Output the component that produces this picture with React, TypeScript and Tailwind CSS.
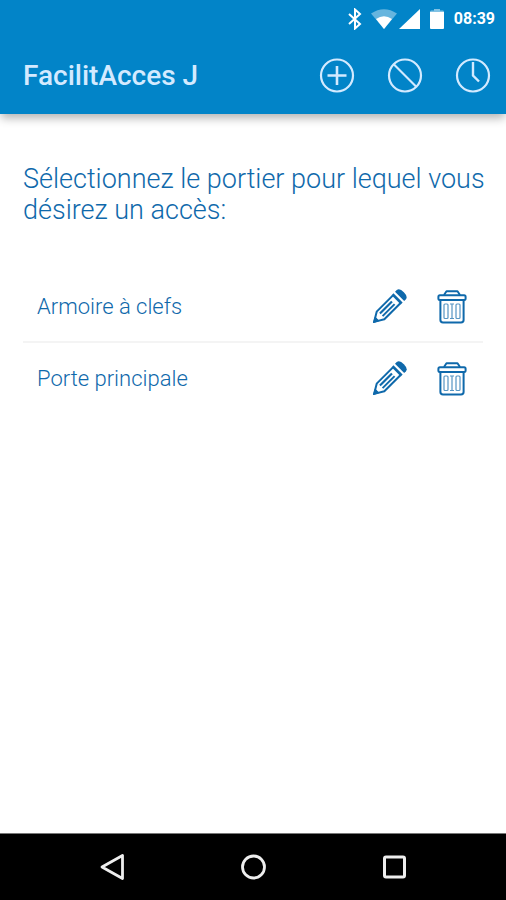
const doors = ["Armoire à clefs", "Porte principale"];

function StatusBar() {
  return (
    <div className="flex h-[38px] items-center justify-end pr-[11px] text-white">
      <svg width="14" height="22" viewBox="0 0 14 22" fill="none" stroke="currentColor" strokeWidth="2" aria-hidden="true">
        <path d="M1 6 L12 16 L7 20.5 V1.5 L12 6 L1 16" />
      </svg>
      <svg className="ml-[9px]" width="26" height="20" viewBox="0 0 26 20" fill="currentColor" aria-hidden="true">
        <path opacity="0.4" d="M0 4.5 Q13 -4 26 4.5 L13 20 Z" />
        <path d="M5 10 Q13 4.5 21 10 L13 20 Z" />
      </svg>
      <svg className="ml-[2px]" width="21" height="20" viewBox="0 0 21 20" fill="currentColor" aria-hidden="true">
        <path d="M21 0 V20 H0 Z" />
      </svg>
      <svg className="ml-[10px]" width="14" height="20" viewBox="0 0 14 20" fill="currentColor" aria-hidden="true">
        <path opacity="0.5" d="M4 0 H10 V1.5 H13 Q14 1.5 14 3 H0 Q0 1.5 1 1.5 H4 Z" />
        <path d="M0 3 H14 V19 Q14 20 13 20 H1 Q0 20 0 19 Z" />
      </svg>
      <span className="ml-[10px] text-[16px] leading-5 font-bold">08:39</span>
    </div>
  );
}

function AppBar() {
  return (
    <div className="flex h-[76px] items-center justify-between pr-[15px] pl-[23px] text-[#d3eaff]">
      <h1 className="text-[28px] font-medium">FacilitAcces J</h1>
      <div className="flex gap-8">
        <button type="button" aria-label="Ajouter">
          <svg width="36" height="36" viewBox="0 0 36 36" fill="none" stroke="currentColor" strokeWidth="2.2">
            <circle cx="18" cy="17.5" r="16" />
            <path d="M18 8 V27 M8.5 17.5 H27.5" strokeWidth="2.6" />
          </svg>
        </button>
        <button type="button" aria-label="Bloquer">
          <svg width="36" height="36" viewBox="0 0 36 36" fill="none" stroke="currentColor" strokeWidth="2.2">
            <circle cx="18" cy="17.5" r="16" />
            <path d="M7 6.5 L29 28.5" />
          </svg>
        </button>
        <button type="button" aria-label="Historique">
          <svg width="36" height="36" viewBox="0 0 36 36" fill="none" stroke="currentColor" strokeWidth="2.2">
            <circle cx="18" cy="17.5" r="16" />
            <path d="M18 4 V17.5 L24 23.5" strokeWidth="2.4" />
          </svg>
        </button>
      </div>
    </div>
  );
}

function PencilIcon() {
  return (
    <svg width="36" height="36" viewBox="0 0 36 36" fill="none" stroke="currentColor" strokeWidth="2" strokeLinejoin="round">
      <g transform="rotate(45 18 18)">
        <path d="M11.5 3 V0.5 Q12 -3 18 -3 Q24 -3 24.5 0.5 V3 Z" fill="currentColor" stroke="none" />
        <path d="M11.5 6.5 H24.5" strokeWidth="2.6" />
        <path d="M12.6 7 V30 L18 39 L23.4 30 V7" />
        <path d="M16.2 12 V29" strokeWidth="2.2" />
        <path d="M19.9 12 V29" strokeWidth="2" />
        <path d="M15.5 35 L18 40 L20.5 35 Z" fill="currentColor" strokeWidth="1" />
      </g>
    </svg>
  );
}

function TrashIcon() {
  return (
    <svg width="36" height="36" viewBox="0 0 36 36" fill="none" stroke="currentColor" strokeWidth="2" strokeLinejoin="round">
      <path d="M10 6 L12.5 2.2 H23.5 L26 6" />
      <rect x="4.4" y="6.2" width="27.2" height="4.8" rx="1.5" />
      <path d="M6.4 11 V31 Q6.4 33.4 9 33.4 H27 Q29.6 33.4 29.6 31 V11" />
      <g strokeWidth="1.2" opacity="0.7">
        <rect x="10" y="15" width="4" height="14.5" rx="1" />
        <path d="M16 15 H20 M18 15 V29.5 M16 29.5 H20" />
        <rect x="22" y="15" width="4" height="14.5" rx="1" />
      </g>
    </svg>
  );
}

function NavigationBar() {
  return (
    <nav className="flex h-[67px] border-t border-[#777777] bg-black px-[42px] text-[#eeeeee]">
      <button type="button" aria-label="Retour" className="flex flex-1 items-center justify-center">
        <svg width="28" height="28" viewBox="0 0 28 28" fill="none" stroke="currentColor" strokeWidth="2.8" strokeLinejoin="round">
          <path d="M4 14 L24.5 2.5 V25.5 Z" />
        </svg>
      </button>
      <button type="button" aria-label="Accueil" className="flex flex-1 items-center justify-center">
        <svg width="28" height="28" viewBox="0 0 28 28" fill="none" stroke="currentColor" strokeWidth="2.8">
          <circle cx="14.5" cy="14" r="11" />
        </svg>
      </button>
      <button type="button" aria-label="Applications récentes" className="flex flex-1 items-center justify-center">
        <svg width="28" height="28" viewBox="0 0 28 28" fill="none" stroke="currentColor" strokeWidth="3">
          <rect x="4.5" y="4" width="20" height="20" rx="1.5" />
        </svg>
      </button>
    </nav>
  );
}

export default function App() {
  return (
    <div className="flex min-h-screen flex-col bg-white font-['Roboto',sans-serif]">
      <header className="bg-[#0284c8] shadow-[0_5px_9px_-1px_rgba(0,0,0,0.3)]">
        <StatusBar />
        <AppBar />
      </header>

      <main className="flex-1 pt-[50px] text-[#0f69ab]">
        <h2 className="pr-3 pl-[23px] text-[27px] leading-[31px] font-light">
          Sélectionnez le portier pour lequel vous désirez un accès:
        </h2>

        <ul className="mx-[23px] mt-[46px] divide-y-2 divide-[#f4f4f4]">
          {doors.map((door) => (
            <li key={door} className="flex h-[71px] items-center pr-[13px] pl-[14px]">
              <span className="flex-1 text-[22px] font-light">{door}</span>
              <div className="flex gap-[27px]">
                <button type="button" aria-label={`Modifier ${door}`}>
                  <PencilIcon />
                </button>
                <button type="button" aria-label={`Supprimer ${door}`}>
                  <TrashIcon />
                </button>
              </div>
            </li>
          ))}
        </ul>
      </main>

      <NavigationBar />
    </div>
  );
}
